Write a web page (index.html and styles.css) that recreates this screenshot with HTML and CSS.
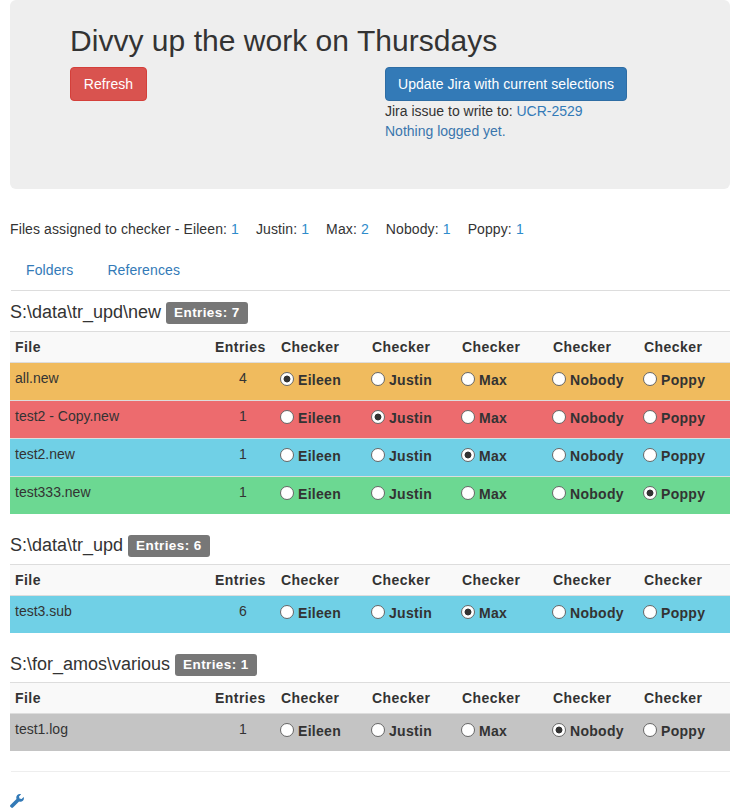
FILE: index.html
```html
<!DOCTYPE html>
<html lang="en">

	<head>
		<meta charset="utf-8">
		<title>Divvy up the work</title>
		<meta name="viewport" content="width=device-width, initial-scale=1.0">

		<link rel="stylesheet" href="styles.css">
	</head>

	<body>

		<div class="jumbotron">
			<h2>Divvy up the work on Thursdays</h2>
			<div class="actions">
				<div class="col-left">
					<button class="btn btn-danger" type="button">Refresh</button>
				</div>
				<div>
					<button class="btn btn-primary" type="button">Update Jira with current selections</button>
					<p>Jira issue to write to: <a href="#">UCR-2529</a></p>
					<p class="log">Nothing logged yet.</p>
				</div>
			</div>
		</div>

		<p class="totals">
			<span>Files assigned to checker - Eileen: <a href="#">1</a></span>
			<span>Justin: <a href="#">1</a></span>
			<span>Max: <a href="#">2</a></span>
			<span>Nobody: <a href="#">1</a></span>
			<span>Poppy: <a href="#">1</a></span>
		</p>

		<ul class="tabs">
			<li><a href="#">Folders</a></li>
			<li><a href="#">References</a></li>
		</ul>

		<h4>S:\data\tr_upd\new <span class="label">Entries: 7</span></h4>
		<table>
			<colgroup>
				<col class="c-file"><col class="c-entries"><col class="c-a"><col class="c-b"><col class="c-c"><col class="c-c"><col class="c-d">
			</colgroup>
			<thead>
				<tr><th>File</th><th>Entries</th><th>Checker</th><th>Checker</th><th>Checker</th><th>Checker</th><th>Checker</th></tr>
			</thead>
			<tbody>
				<tr class="warn">
					<td>all.new</td><td class="center">4</td>
					<td><label><input type="radio" name="f1" checked>Eileen</label></td>
					<td><label><input type="radio" name="f1">Justin</label></td>
					<td><label><input type="radio" name="f1">Max</label></td>
					<td><label><input type="radio" name="f1">Nobody</label></td>
					<td><label><input type="radio" name="f1">Poppy</label></td>
				</tr>
				<tr class="bad">
					<td>test2 - Copy.new</td><td class="center">1</td>
					<td><label><input type="radio" name="f2">Eileen</label></td>
					<td><label><input type="radio" name="f2" checked>Justin</label></td>
					<td><label><input type="radio" name="f2">Max</label></td>
					<td><label><input type="radio" name="f2">Nobody</label></td>
					<td><label><input type="radio" name="f2">Poppy</label></td>
				</tr>
				<tr class="info">
					<td>test2.new</td><td class="center">1</td>
					<td><label><input type="radio" name="f3">Eileen</label></td>
					<td><label><input type="radio" name="f3">Justin</label></td>
					<td><label><input type="radio" name="f3" checked>Max</label></td>
					<td><label><input type="radio" name="f3">Nobody</label></td>
					<td><label><input type="radio" name="f3">Poppy</label></td>
				</tr>
				<tr class="good">
					<td>test333.new</td><td class="center">1</td>
					<td><label><input type="radio" name="f4">Eileen</label></td>
					<td><label><input type="radio" name="f4">Justin</label></td>
					<td><label><input type="radio" name="f4">Max</label></td>
					<td><label><input type="radio" name="f4">Nobody</label></td>
					<td><label><input type="radio" name="f4" checked>Poppy</label></td>
				</tr>
			</tbody>
		</table>

		<h4>S:\data\tr_upd <span class="label">Entries: 6</span></h4>
		<table>
			<colgroup>
				<col class="c-file"><col class="c-entries"><col class="c-a"><col class="c-b"><col class="c-c"><col class="c-c"><col class="c-d">
			</colgroup>
			<thead>
				<tr><th>File</th><th>Entries</th><th>Checker</th><th>Checker</th><th>Checker</th><th>Checker</th><th>Checker</th></tr>
			</thead>
			<tbody>
				<tr class="info">
					<td>test3.sub</td><td class="center">6</td>
					<td><label><input type="radio" name="f5">Eileen</label></td>
					<td><label><input type="radio" name="f5">Justin</label></td>
					<td><label><input type="radio" name="f5" checked>Max</label></td>
					<td><label><input type="radio" name="f5">Nobody</label></td>
					<td><label><input type="radio" name="f5">Poppy</label></td>
				</tr>
			</tbody>
		</table>

		<h4 class="tight">S:\for_amos\various <span class="label">Entries: 1</span></h4>
		<table>
			<colgroup>
				<col class="c-file"><col class="c-entries"><col class="c-a"><col class="c-b"><col class="c-c"><col class="c-c"><col class="c-d">
			</colgroup>
			<thead>
				<tr><th>File</th><th>Entries</th><th>Checker</th><th>Checker</th><th>Checker</th><th>Checker</th><th>Checker</th></tr>
			</thead>
			<tbody>
				<tr class="none">
					<td>test1.log</td><td class="center">1</td>
					<td><label><input type="radio" name="f6">Eileen</label></td>
					<td><label><input type="radio" name="f6">Justin</label></td>
					<td><label><input type="radio" name="f6">Max</label></td>
					<td><label><input type="radio" name="f6" checked>Nobody</label></td>
					<td><label><input type="radio" name="f6">Poppy</label></td>
				</tr>
			</tbody>
		</table>

		<hr>

		<a class="settings" href="#" aria-label="Settings">
			<svg width="14" height="14" viewBox="0 0 14 14"><path d="M13.700 2.900 11.600 5 9.500 4.500 9 2.400 11.100.3C9.700-.2 8.300.2 7.300 1.100 6.300 2.100 6 3.600 6.500 4.900L.4 11C-.1 11.500-.1 12.300.4 12.800L1.200 13.600C1.700 14.100 2.500 14.100 3 13.600L9.100 7.500C10.400 8 11.900 7.700 12.900 6.700 13.800 5.700 14.200 4.300 13.700 2.900Z"/></svg>
		</a>

	</body>
</html>
```
FILE: styles.css
```css
body {
	color: #333;
	font-family: "Liberation Sans", Arial, sans-serif;
	font-size: 14px;
	line-height: 20px;
	margin: 0;
	padding: 0 11px 0 10px;
}

a {
	color: #337ab7;
	text-decoration: none;
}

p {
	margin: 0;
}

.jumbotron {
	background: #eee;
	border-radius: 6px;
	height: 189px;
	box-sizing: border-box;
	padding: 24px 60px 0;
}

h2 {
	font-size: 30px;
	font-weight: 500;
	letter-spacing: .03px;
	line-height: 33px;
	margin: 0 0 10px;
}

.actions {
	display: flex;
}

.col-left {
	width: 315px;
}

.btn {
	border: 1px solid transparent;
	border-radius: 4px;
	color: #fff;
	font-family: inherit;
	font-size: 14px;
	height: 34px;
	letter-spacing: .06px;
	line-height: 20px;
	padding: 6px 12px;
	white-space: nowrap;
}

.btn-danger {
	background: #d9534f;
	border-color: #d43f3a;
	width: 77px;
}

.btn-primary {
	background: #337ab7;
	border-color: #2e6da4;
	width: 242px;
}

.log {
	color: #3a76ad;
}

.totals {
	display: flex;
	gap: 17px;
	letter-spacing: .11px;
	margin: 30px 0 10px;
}

.totals a {
	color: #2f8ccb;
}

.tabs {
	border-bottom: 1px solid #ddd;
	display: flex;
	gap: 4px;
	letter-spacing: .1px;
	list-style: none;
	margin: 0 0 0 1px;
	padding: 0;
}

.tabs a {
	display: block;
	padding: 11px 15px 10px;
}

h4 {
	font-size: 18px;
	font-weight: 500;
	line-height: 20px;
	margin: 10px 0 9px;
	padding-top: 1px;
}

h4.tight {
	margin-bottom: 8px;
}

.label {
	background: #777;
	border-radius: 3px;
	color: #fff;
	font-size: 13.5px;
	font-weight: 700;
	letter-spacing: .4px;
	line-height: 1;
	padding: 3px 8px 4px;
	vertical-align: 1px;
}

table {
	border-collapse: collapse;
	margin-bottom: 20px;
	table-layout: fixed;
	width: 720px;
}

.c-file {
	width: 200px;
}

.c-entries {
	width: 66px;
}

.c-a,
.c-c {
	width: 91px;
}

.c-b {
	width: 90px;
}

th,
td {
	padding: 5px;
	text-align: left;
	vertical-align: top;
}

th {
	background: #f9f9f9;
	border-bottom: 1px solid #ddd;
	border-top: 1px solid #ddd;
	letter-spacing: .45px;
}

tbody tr + tr td {
	border-top: 1px solid #ddd;
}

td.center {
	text-align: center;
}

label {
	align-items: center;
	display: flex;
	font-weight: 700;
	gap: 4px;
	letter-spacing: .3px;
	margin-bottom: 5px;
	padding-top: 2px;
}

input[type="radio"] {
	appearance: none;
	background: #fff;
	border: 1px solid #666;
	border-radius: 50%;
	box-sizing: border-box;
	flex: none;
	height: 14px;
	margin: -2px 0 0 -1px;
	width: 14px;
}

input[type="radio"]:checked {
	background: radial-gradient(circle, #333 0 3px, #fff 3.800px);
}

.warn td {
	background: #f0bb5e;
}

.bad td {
	background: #ed6b6e;
}

.info td {
	background: #70d0e6;
}

.good td {
	background: #6cd892;
}

.none td {
	background: #c4c4c4;
}

hr {
	border: 0;
	border-top: 1px solid #eee;
	margin: 20px 0 20px 1px;
}

.settings {
	display: block;
	height: 14px;
	margin-top: 22px;
}

.settings svg {
	display: block;
	fill: #337ab7;
}
```
